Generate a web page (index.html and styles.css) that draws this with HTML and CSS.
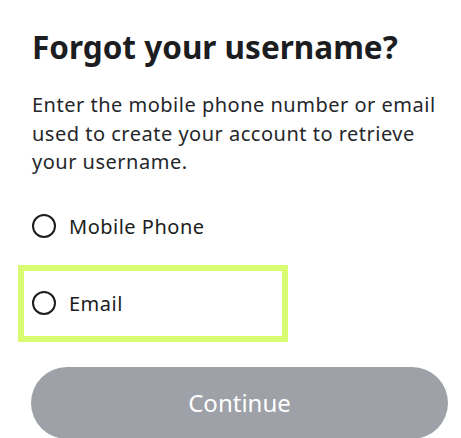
FILE: index.html
```html
<!DOCTYPE html>
<html lang="en">
<head>
<meta charset="utf-8">
<title>Forgot your username?</title>
<link rel="stylesheet" href="styles.css">
</head>
<body>
<main class="page">
  <h1 class="title">Forgot your username?</h1>
  <p class="intro">Enter the mobile phone number or email used to create your account to retrieve your username.</p>
  <div class="options">
    <label class="option">
      <span class="radio"></span>
      <span class="option-label">Mobile Phone</span>
    </label>
    <label class="option option-focused">
      <span class="radio"></span>
      <span class="option-label">Email</span>
    </label>
  </div>
  <button class="continue" type="button">Continue</button>
</main>
</body>
</html>
```

FILE: styles.css
```css
html, body {
  margin: 0;
  padding: 0;
  background: #ffffff;
}

body {
  font-family: "Noto Sans", "Open Sans", sans-serif;
  color: #1b1d21;
  overflow: hidden;
}

.page {
  width: 416px;
  padding: 27px 0 0 32px;
}

.title {
  margin: 0;
  font-size: 31.5px;
  line-height: 40px;
  font-weight: 700;
  color: #1b1d21;
}

.intro {
  margin: 24px 0 0;
  font-size: 20px;
  line-height: 28.6px;
  letter-spacing: 0.5px;
  color: #25272b;
}

.options {
  display: flex;
  flex-direction: column;
  gap: 12.5px;
  margin-top: 16.5px;
}

.option {
  display: flex;
  align-items: center;
  gap: 13px;
  height: 65px;
  width: 258px;
  box-sizing: border-box;
  margin-left: -8px;
  padding: 0 8px;
  font-size: 20px;
  line-height: 28px;
  letter-spacing: 0.5px;
}

.option-focused {
  outline: 6px solid #d8fb71;
}

.radio {
  flex: none;
  width: 24px;
  height: 24px;
  box-sizing: border-box;
  border: 2.2px solid #1b1d21;
  border-radius: 50%;
}

.option-label {
  color: #1b1d21;
  padding-top: 2px;
}

.continue {
  display: block;
  margin-top: 31px;
  width: 417px;
  height: 72px;
  margin-left: -1px;
  border: none;
  border-radius: 36px;
  background: #9ea2a8;
  color: #ffffff;
  font-family: "Noto Sans", "Open Sans", sans-serif;
  font-size: 24px;
  padding: 0;
}
```
